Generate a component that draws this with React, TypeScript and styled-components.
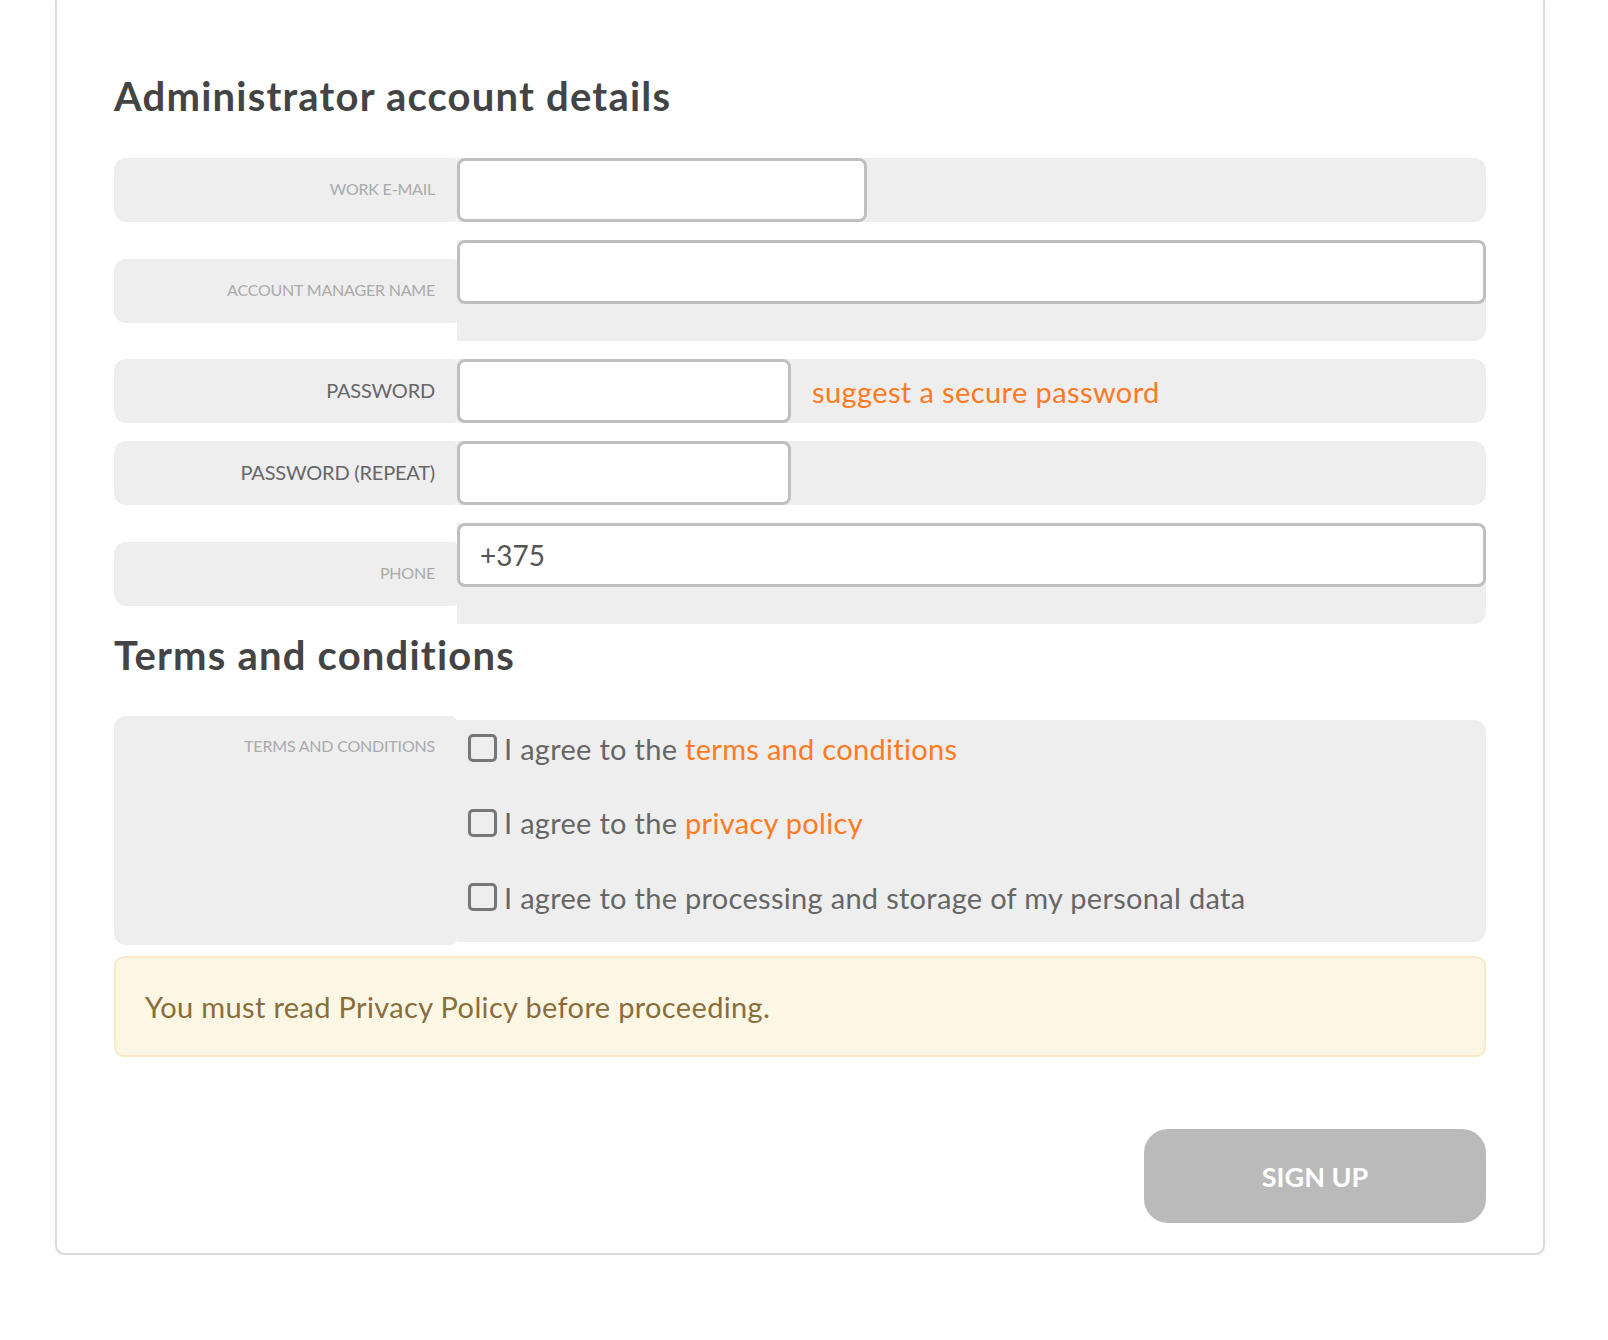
import React, { FC } from 'react'
import styled, { createGlobalStyle } from 'styled-components'

const GlobalStyle = createGlobalStyle`
	body {
		margin: 0;
		background: #fff;
		font-family: Lato, 'Liberation Sans', sans-serif;
	}
`

const Page = styled.div`
	padding: 0 0 0 55px;
	width: 1490px;
`

const Card = styled.div`
	background: #fff;
	border: 2px solid #dcdcdc;
	border-top: none;
	border-radius: 0 0 10px 10px;
	box-shadow: 0 2px 3px rgba(0, 0, 0, 0.06);
	padding: 72px 57px 30px;
`

const Heading = styled.h2<{ $top?: number }>`
	margin: ${(p) => p.$top ?? 0}px 0 0;
	font-size: 40px;
	line-height: 48px;
	font-weight: 700;
	letter-spacing: 1.2px;
	color: #444;
`

const Rows = styled.div<{ $top?: number }>`
	display: flex;
	flex-direction: column;
	gap: 18px;
	margin-top: ${(p) => p.$top ?? 38}px;
`

const Row = styled.div`
	display: flex;
	align-items: center;
`

const Label = styled.div<{ $strong?: boolean }>`
	flex: 0 0 343px;
	box-sizing: border-box;
	height: 64px;
	padding: 0 22px 3px 0;
	display: flex;
	align-items: center;
	justify-content: flex-end;
	background: #eee;
	border-radius: 12px 4px 4px 12px;
	text-transform: uppercase;
	font-size: ${(p) => (p.$strong ? 20 : 16)}px;
	letter-spacing: -0.2px;
	color: ${(p) => (p.$strong ? '#666' : '#aaa')};
`

const Field = styled.div<{ $wide?: boolean }>`
	flex: 1;
	display: flex;
	flex-direction: ${(p) => (p.$wide ? 'column' : 'row')};
	align-items: ${(p) => (p.$wide ? 'stretch' : 'center')};
	box-sizing: border-box;
	min-height: 64px;
	padding-bottom: ${(p) => (p.$wide ? 37 : 0)}px;
	background: #eee;
	border-radius: 0 12px 12px 0;
`

const Input = styled.input<{ $width?: number }>`
	box-sizing: border-box;
	width: ${(p) => (p.$width ? `${p.$width}px` : '100%')};
	height: 64px;
	margin: 0;
	padding: 0 20px;
	border: 3px solid #bfbfbf;
	border-radius: 8px;
	background: #fff;
	font-family: inherit;
	font-size: 28px;
	color: #555;
	outline: none;
`

const Link = styled.a`
	color: #ff7a22;
	text-decoration: none;
	cursor: pointer;
`

const Suggest = styled(Link)`
	margin-left: 21px;
	font-size: 29px;
	letter-spacing: 0.4px;
`

const TermsLabel = styled(Label)`
	height: 229px;
	align-items: flex-start;
	padding-top: 20px;
	border-radius: 12px 6px 6px 12px;
	line-height: 20px;
`

const TermsField = styled.div`
	flex: 1;
	display: flex;
	flex-direction: column;
	gap: 39.5px;
	padding: 11px 0 27px 11px;
	background: #eee;
	border-radius: 0 12px 12px 0;
`

const Check = styled.label`
	display: flex;
	align-items: center;
	gap: 7px;
	height: 35px;
	font-size: 29px;
	letter-spacing: 0.3px;
	color: #666;
	cursor: pointer;
`

const Box = styled.span`
	box-sizing: border-box;
	width: 29px;
	height: 28px;
	border: 3px solid #777;
	border-radius: 5px;
	background: #eee;
	flex: none;
`

const Alert = styled.div`
	box-sizing: border-box;
	height: 101px;
	margin-top: 11px;
	padding: 0 29px;
	display: flex;
	align-items: center;
	background: #fcf7e4;
	border: 2px solid #f9e8c6;
	border-radius: 10px;
	font-size: 29px;
	letter-spacing: 0.35px;
	color: #8a6d3b;
`

const Actions = styled.div`
	display: flex;
	justify-content: flex-end;
	margin-top: 72px;
`

const SignUp = styled.button`
	width: 342px;
	height: 94px;
	border: none;
	border-radius: 24px;
	background: #bababa;
	color: #fff;
	font-family: inherit;
	font-size: 27px;
	font-weight: 700;
	text-transform: uppercase;
	cursor: not-allowed;
`

const agreements: { text: string; link?: string }[] = [
	{ text: 'I agree to the ', link: 'terms and conditions' },
	{ text: 'I agree to the ', link: 'privacy policy' },
	{ text: 'I agree to the processing and storage of my personal data' },
]

const App: FC = () => {
	return (
		<Page>
			<GlobalStyle />
			<Card>
				<Heading>Administrator account details</Heading>
				<Rows>
					<Row>
						<Label>Work e-mail</Label>
						<Field>
							<Input type="email" $width={410} />
						</Field>
					</Row>
					<Row>
						<Label>Account manager name</Label>
						<Field $wide>
							<Input type="text" />
						</Field>
					</Row>
					<Row>
						<Label $strong>Password</Label>
						<Field>
							<Input type="password" $width={334} />
							<Suggest>suggest a secure password</Suggest>
						</Field>
					</Row>
					<Row>
						<Label $strong>Password (repeat)</Label>
						<Field>
							<Input type="password" $width={334} />
						</Field>
					</Row>
					<Row>
						<Label>Phone</Label>
						<Field $wide>
							<Input type="tel" defaultValue="+375" />
						</Field>
					</Row>
				</Rows>

				<Heading $top={7}>Terms and conditions</Heading>
				<Rows $top={37}>
					<Row>
						<TermsLabel>Terms and conditions</TermsLabel>
						<TermsField>
							{agreements.map((a, i) => (
								<Check key={i}>
									<Box />
									<span>
										{a.text}
										{a.link && <Link>{a.link}</Link>}
									</span>
								</Check>
							))}
						</TermsField>
					</Row>
				</Rows>

				<Alert>You must read Privacy Policy before proceeding.</Alert>
				<Actions>
					<SignUp type="button">Sign up</SignUp>
				</Actions>
			</Card>
		</Page>
	)
}

export default App
